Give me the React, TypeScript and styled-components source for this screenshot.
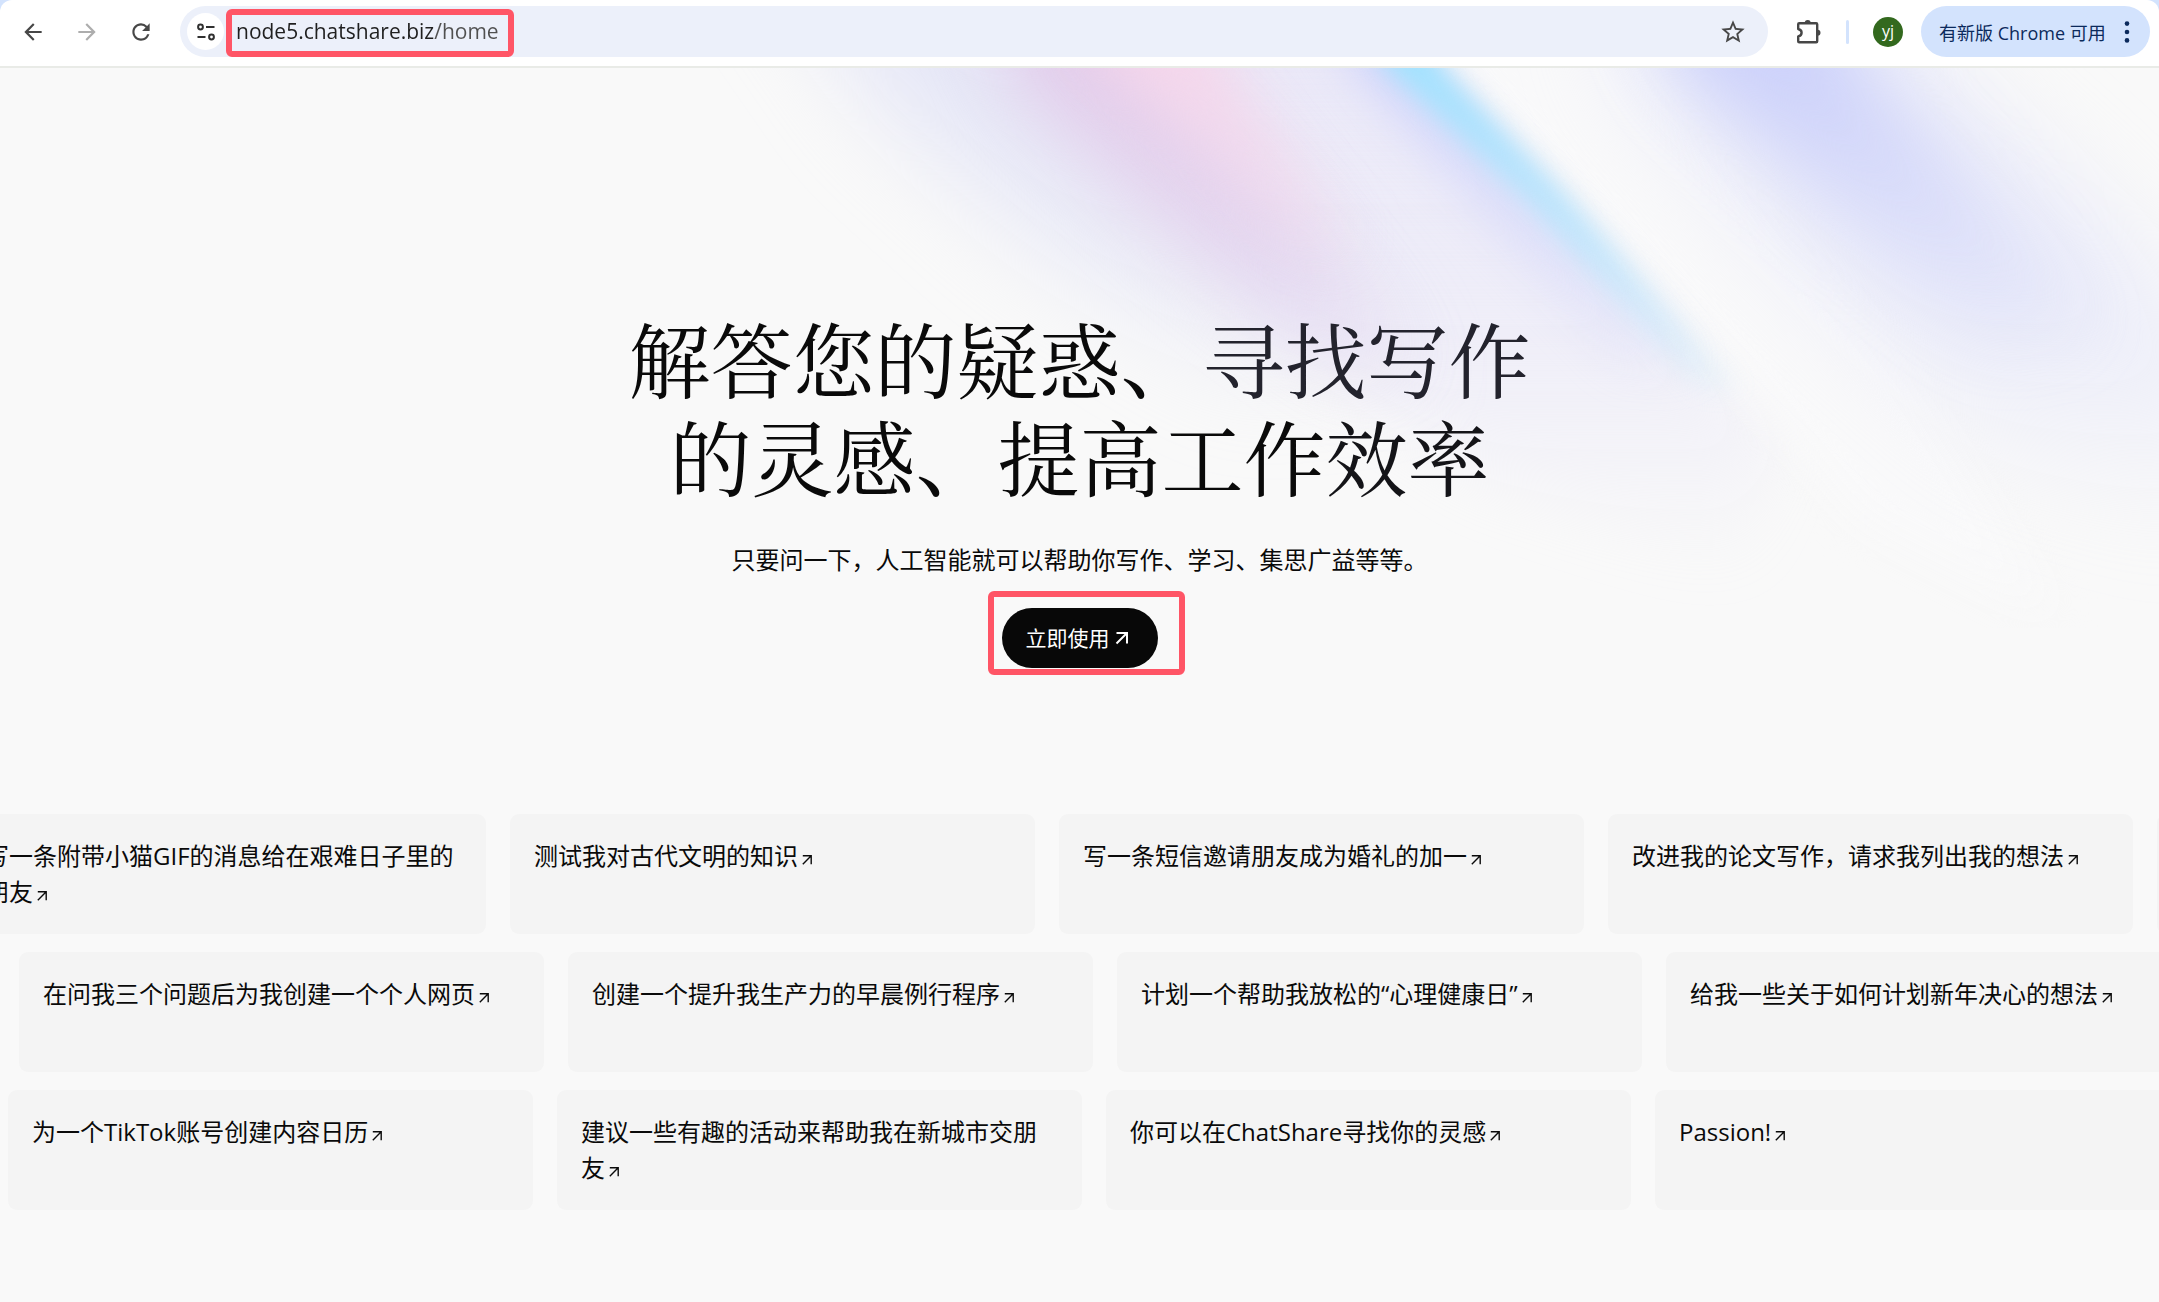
import React from "react";
import styled, { createGlobalStyle, css } from "styled-components";
import { MdArrowBack, MdArrowForward, MdRefresh, MdStarBorder } from "react-icons/md";

const sans = `"Open Sans", "Noto Sans CJK SC", sans-serif`;
const serif = `"Noto Serif CJK SC", "Noto Sans CJK SC", serif`;

const GlobalStyle = createGlobalStyle`
  *, *::before, *::after { box-sizing: border-box; }
  body { margin: 0; background: #f9f9f9; color: #0a0a0a; font-family: ${sans}; }
`;

const Page = styled.div`
  display: flex;
  flex-direction: column;
  min-height: 100vh;
  overflow: hidden;
`;

/* ---------- browser toolbar ---------- */

const Frame = styled.header`
  background: #d3e3fd;
`;

const Toolbar = styled.div`
  display: flex;
  align-items: center;
  height: 68px;
  padding: 6px 9px 9px 15px;
  background: #fff;
  border-bottom: 2px solid #e9ebe7;
  border-radius: 12px 12px 0 0;
`;

const bareButton = css`
  display: flex;
  align-items: center;
  justify-content: center;
  padding: 0;
  border: 0;
  background: none;
  font-family: inherit;
  cursor: pointer;
`;

const NavButtons = styled.nav`
  display: flex;
  gap: 18px;
  margin-right: 21px;
`;

const IconButton = styled.button<{ $muted?: boolean }>`
  ${bareButton}
  width: 36px;
  height: 36px;
  font-size: 26px;
  color: ${(p) => (p.$muted ? "#adadad" : "#474747")};
`;

const Omnibox = styled.div`
  display: flex;
  flex: 1;
  align-items: center;
  height: 51px;
  padding: 0 17px 0 7px;
  border-radius: 26px;
  background: #ecf0fa;
`;

const SiteInfo = styled.button`
  ${bareButton}
  width: 37px;
  height: 37px;
  border-radius: 50%;
  background: #fff;
  color: #303030;
`;

const AddressField = styled.div`
  position: relative;
  display: flex;
  flex: 1;
  height: 51px;
`;

const Address = styled.input`
  width: 100%;
  padding: 0 0 2px 12px;
  border: 0;
  outline: 0;
  font-family: ${sans};
  font-size: 21px;
  color: transparent;
  background: linear-gradient(90deg, #1f1f1f 210px, #505050 210px);
  background-clip: text;
  -webkit-background-clip: text;
`;

const Marker = styled.span<{ $inset: string }>`
  position: absolute;
  inset: ${(p) => p.$inset};
  border: 6px solid #ff5566;
  border-radius: 6px;
  pointer-events: none;
`;

const AddressMarker = styled(Marker)`
  width: 288px;
`;

const Tools = styled.div`
  display: flex;
  align-items: center;
  margin-left: 23px;
`;

const Divider = styled.span`
  width: 3px;
  height: 24px;
  margin: 0 24px 0 19px;
  border-radius: 2px;
  background: #d3e3fd;
`;

const Avatar = styled.button`
  ${bareButton}
  width: 30px;
  height: 30px;
  margin-right: 18px;
  padding-bottom: 2px;
  border-radius: 50%;
  background: #33691e;
  color: #fff;
  font-size: 16px;
`;

const UpdatePill = styled.button`
  ${bareButton}
  justify-content: space-between;
  width: 229px;
  height: 51px;
  padding: 0 16px 0 18px;
  border-radius: 26px;
  background: #d3e3fd;
  color: #0b2a5c;
  font-size: 18px;
  white-space: nowrap;
`;

/* ---------- landing page ---------- */

const Main = styled.main`
  position: relative;
  flex: 1;
`;

const Aurora = styled.svg`
  position: absolute;
  top: 0;
  right: 0;
  width: 1459px;
  height: 560px;
`;

const Hero = styled.section`
  position: relative;
  display: flex;
  flex-direction: column;
  align-items: center;
  padding: 240px 24px 146px;
  text-align: center;
`;

const Title = styled.h1`
  margin: 0 0 38px;
  font-family: ${serif};
  font-size: 82px;
  font-weight: 400;
  line-height: 98px;
`;

const Tint = styled.span<{ $tone: string }>`
  color: ${(p) => p.$tone};
`;

const Subtitle = styled.p`
  margin: 0 0 30px;
  font-size: 24px;
  line-height: 36px;
`;

const CallToAction = styled.div`
  position: relative;
`;

const StartLink = styled.a`
  display: flex;
  align-items: center;
  height: 60px;
  padding: 0 24px;
  border-radius: 30px;
  background: #080808;
  color: #fff;
  font-size: 21px;
  line-height: 30px;
  text-decoration: none;
`;

const Prompts = styled.section`
  position: relative;
  display: flex;
  flex-direction: column;
  gap: 18px;
  overflow: hidden;
`;

const Track = styled.div<{ $shift: number }>`
  display: flex;
  gap: 24px;
  width: max-content;
  margin-left: ${(p) => p.$shift}px;
`;

const Card = styled.a`
  width: 525px;
  height: 120px;
  padding: 24px;
  border-radius: 9px;
  background: #f4f4f4;
  color: #0a0a0a;
  font-size: 24px;
  line-height: 36px;
  text-decoration: none;
`;

const CardArrow = styled.svg`
  margin-left: 4px;
`;

const rows = [
  {
    shift: -39,
    items: [
      "写一条附带小猫GIF的消息给在艰难日子里的朋友",
      "测试我对古代文明的知识",
      "写一条短信邀请朋友成为婚礼的加一",
      "改进我的论文写作，请求我列出我的想法",
      "",
    ],
  },
  {
    shift: 19,
    items: [
      "在问我三个问题后为我创建一个个人网页",
      "创建一个提升我生产力的早晨例行程序",
      "计划一个帮助我放松的“心理健康日”",
      "给我一些关于如何计划新年决心的想法",
    ],
  },
  {
    shift: 8,
    items: [
      "为一个TikTok账号创建内容日历",
      "建议一些有趣的活动来帮助我在新城市交朋友",
      "你可以在ChatShare寻找你的灵感",
      "Passion!",
    ],
  },
];

const TuneIcon = () => (
  <svg width="20" height="20" viewBox="0 0 20 20" fill="none" stroke="currentColor" strokeWidth="2" aria-hidden="true">
    <circle cx="4.5" cy="5" r="2.4" />
    <path d="M10 5h8.5M1.5 15h8" />
    <circle cx="15.5" cy="15" r="2.4" />
  </svg>
);

const PuzzleIcon = () => (
  <svg width="26" height="26" viewBox="0 0 26 26" aria-hidden="true">
    <path
      d="M3.2 4.2H20.2Q21.2 4.2 21.2 5.2V22.2Q21.2 23.2 20.2 23.2H3.2Q2.2 23.2 2.2 22.2V17.4Q5.6 16.6 5.6 13.7T2.2 10V5.2Q2.2 4.2 3.2 4.2Z"
      fill="none"
      stroke="currentColor"
      strokeWidth="2.4"
      strokeLinejoin="round"
    />
    <path d="M8.7 4a3 3 0 0 1 6 0zM21.5 10.7a3 3 0 0 1 0 6z" fill="currentColor" />
  </svg>
);

const MoreIcon = () => (
  <svg width="14" height="24" viewBox="0 0 14 24" fill="currentColor" aria-hidden="true">
    <circle cx="7" cy="3.6" r="2.3" />
    <circle cx="7" cy="12" r="2.3" />
    <circle cx="7" cy="20.4" r="2.3" />
  </svg>
);

const lights: [string, string, number, number, number][] = [
  ["wash", "#e8e6f8", 570, 0.85, 0.6],
  ["edge", "#dfe1f6", 430, 0.75, 0.55],
  ["violet", "#e2caea", 400, 0.9, 0.6],
  ["pink", "#f8d6ea", 290, 0.85, 0.5],
  ["rim", "#d2d6fb", 420, 0.9, 0.5],
  ["cyan", "#a3e2fe", 420, 1, 0.55],
  ["blue", "#cbd0fa", 390, 0.95, 0.45],
  ["haze", "#e4e6fa", 540, 0.7, 0.65],
];

const AuroraLight = () => (
  <Aurora viewBox="700 68 1459 560" preserveAspectRatio="xMaxYMin slice" aria-hidden="true">
    <defs>
      {[12, 20, 28, 34, 44].map((d) => (
        <filter
          key={d}
          id={`soft${d}`}
          filterUnits="userSpaceOnUse"
          x="400"
          y="-300"
          width="2200"
          height="1100"
          colorInterpolationFilters="sRGB"
        >
          <feGaussianBlur stdDeviation={d} />
        </filter>
      ))}
      {lights.map(([id, color, end, start, middle]) => (
        <linearGradient key={id} id={id} gradientUnits="userSpaceOnUse" x1="0" y1="68" x2="0" y2={end}>
          <stop offset="0" stopColor={color} stopOpacity={start} />
          <stop offset="0.5" stopColor={color} stopOpacity={middle} />
          <stop offset="1" stopColor={color} stopOpacity="0" />
        </linearGradient>
      ))}
    </defs>
    <path d="M1000 -120L1340 -120L1440 68L1780 440L1740 580L1480 480L1260 320Z" fill="url(#wash)" filter="url(#soft28)" />
    <path d="M720 -120L1040 -120L1120 68L1420 370L1240 400L1020 240L880 110Z" fill="url(#edge)" filter="url(#soft44)" />
    <path d="M930 -120L1100 -120L1170 68L1270 180L1450 390L1350 400L1180 250L1020 90Z" fill="url(#violet)" filter="url(#soft34)" />
    <path d="M1020 -120L1160 -120L1230 68L1360 250L1310 260L1180 130L1100 60Z" fill="url(#pink)" filter="url(#soft28)" />
    <path d="M1300 -120L1560 -120L1660 68L1900 370L2060 620L1860 520L1700 330L1450 68Z" fill="#f9f9fa" filter="url(#soft20)" />
    <path d="M1260 -120L1340 -120L1430 68L1700 370L1620 370L1350 68Z" fill="url(#rim)" filter="url(#soft20)" />
    <path d="M1290 -120L1345 -120L1442 68L1562 190L1740 390L1700 390L1525 200L1387 68Z" fill="url(#cyan)" filter="url(#soft12)" />
    <path d="M1600 -120L1840 -120L1940 68L2110 220L2260 420L2220 560L1980 450L1760 230L1620 68Z" fill="url(#haze)" filter="url(#soft44)" />
    <path d="M1600 -120L1780 -120L1860 68L1960 170L2090 330L1990 350L1820 200L1680 68Z" fill="url(#blue)" filter="url(#soft34)" />
  </Aurora>
);

export default function App() {
  return (
    <Page>
      <GlobalStyle />
      <Frame>
        <Toolbar>
          <NavButtons aria-label="导航">
            <IconButton aria-label="后退">
              <MdArrowBack />
            </IconButton>
            <IconButton $muted aria-label="前进">
              <MdArrowForward />
            </IconButton>
            <IconButton aria-label="重新加载">
              <MdRefresh />
            </IconButton>
          </NavButtons>
          <Omnibox>
            <SiteInfo aria-label="网站信息">
              <TuneIcon />
            </SiteInfo>
            <AddressField>
              <Address aria-label="地址" defaultValue="node5.chatshare.biz/home" spellCheck={false} />
              <AddressMarker $inset="3px auto 0 2px" />
            </AddressField>
            <IconButton aria-label="收藏">
              <MdStarBorder size={28} />
            </IconButton>
          </Omnibox>
          <Tools>
            <IconButton aria-label="扩展程序">
              <PuzzleIcon />
            </IconButton>
            <Divider />
            <Avatar>yj</Avatar>
            <UpdatePill>
              有新版 Chrome 可用
              <MoreIcon />
            </UpdatePill>
          </Tools>
        </Toolbar>
      </Frame>
      <Main>
        <AuroraLight />
        <Hero>
          <Title>
            解答您的疑惑、<Tint $tone="#23232d">寻找写作</Tint>
            <br />
            的灵感、提高工作<Tint $tone="#141418">效率</Tint>
          </Title>
          <Subtitle>只要问一下，人工智能就可以帮助你写作、学习、集思广益等等。</Subtitle>
          <CallToAction>
            <StartLink href="#start">
              立即使用
              <svg width="24" height="24" viewBox="0 0 24 24" fill="none" stroke="currentColor" strokeWidth="2" aria-hidden="true">
                <path d="M6.5 7H17V17.5M17 7L6.5 17.5" />
              </svg>
            </StartLink>
            <Marker $inset="-17px -27px -7px -14px" />
          </CallToAction>
        </Hero>
        <Prompts>
          {rows.map((row) => (
            <Track key={row.shift} $shift={row.shift}>
              {row.items.map((text, i) => (
                <Card key={i} href="#prompt">
                  {text}
                  {text && (
                    <CardArrow width="10" height="10" viewBox="0 0 10 10" fill="none" stroke="currentColor" strokeWidth="1.4" aria-hidden="true">
                      <path d="M0.8 0.8H9.2V9.2M9.2 0.8L0.8 9.2" />
                    </CardArrow>
                  )}
                </Card>
              ))}
            </Track>
          ))}
        </Prompts>
      </Main>
    </Page>
  );
}
